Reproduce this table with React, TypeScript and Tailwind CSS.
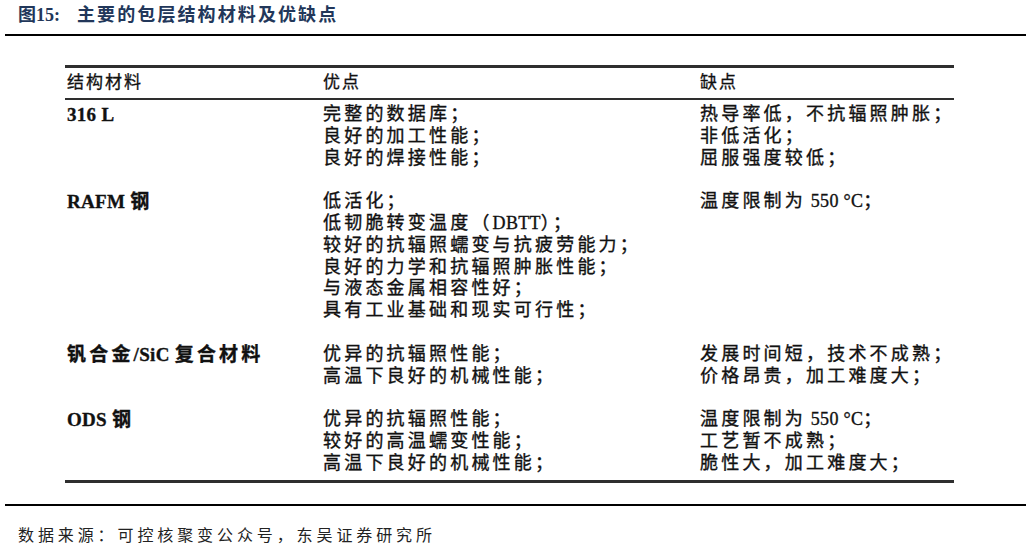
import React from 'react';

const FONT = '"Liberation Serif", "Noto Sans CJK SC", serif';

const ROWS = [
  {
    name: '316 L',
    pros: ['完整的数据库；', '良好的加工性能；', '良好的焊接性能；'],
    cons: ['热导率低，不抗辐照肿胀；', '非低活化；', '屈服强度较低；'],
  },
  {
    name: 'RAFM 钢',
    pros: [
      '低活化；',
      '低韧脆转变温度（DBTT）；',
      '较好的抗辐照蠕变与抗疲劳能力；',
      '良好的力学和抗辐照肿胀性能；',
      '与液态金属相容性好；',
      '具有工业基础和现实可行性；',
    ],
    cons: ['温度限制为 550 °C；'],
  },
  {
    name: '钒合金/SiC 复合材料',
    pros: ['优异的抗辐照性能；', '高温下良好的机械性能；'],
    cons: ['发展时间短，技术不成熟；', '价格昂贵，加工难度大；'],
  },
  {
    name: 'ODS 钢',
    pros: ['优异的抗辐照性能；', '较好的高温蠕变性能；', '高温下良好的机械性能；'],
    cons: ['温度限制为 550 °C；', '工艺暂不成熟；', '脆性大，加工难度大；'],
  },
];

// latin runs keep normal spacing, CJK gets the wide scan-like spacing
function Mixed({ text }: { text: string }) {
  const parts = text.split(/([A-Za-z0-9/°. ]+)/).filter(Boolean);
  return (
    <span className="whitespace-nowrap">
      {parts.map((p, i) =>
        /^[A-Za-z0-9/°. ]+$/.test(p)
          ? <span key={i} className="tracking-[0.3px]">{p}</span>
          : <span key={i} className="tracking-[3.2px]">{p}</span>
      )}
    </span>
  );
}

export default function App() {
  return (
    <div className="w-[1032px] h-[552px] bg-white overflow-hidden" style={{ fontFamily: FONT }}>
      {/* caption */}
      <div className="h-[30px] pl-[18px] flex items-center text-[18px] font-bold text-[#22375a]">
        <span>图15:</span>
        <span className="ml-[17px] tracking-[2.1px]">主要的包层结构材料及优缺点</span>
      </div>
      <div className="mt-[4px] ml-[5px] w-[1021px] h-[2px] bg-black" />

      {/* table */}
      <div className="mt-[29px] ml-[65px] w-[889px] text-[18px] text-[#111]">
        <div className="h-[3px] bg-[#2e2e2e]" />
        <div className="h-[30px] pl-[2px] grid grid-cols-[256px_377px_1fr] items-center tracking-[2px] text-[17px] [-webkit-text-stroke:0.3px_#111]">
          <span>结构材料</span>
          <span>优点</span>
          <span>缺点</span>
        </div>
        <div className="h-[2px] bg-[#2e2e2e]" />
        <div className="pt-[4px] pb-[5px] pl-[2px] flex flex-col gap-[21.8px] leading-[21.8px] [-webkit-text-stroke:0.35px_#111]">
          {ROWS.map(r => (
            <div key={r.name} className="grid grid-cols-[256px_377px_1fr]">
              <div className="font-bold text-[19px] leading-[21.8px]"><Mixed text={r.name} /></div>
              <div className="flex flex-col">
                {r.pros.map(p => <Mixed key={p} text={p} />)}
              </div>
              <div className="flex flex-col">
                {r.cons.map(c => <Mixed key={c} text={c} />)}
              </div>
            </div>
          ))}
        </div>
        <div className="h-[3px] bg-[#2e2e2e]" />
      </div>

      <div className="mt-[21px] ml-[5px] w-[1021px] h-[2px] bg-black" />

      {/* source */}
      <div className="mt-[15px] h-[30px] pl-[18px] leading-[30px] text-[16px] tracking-[3.9px] text-[#222]">
        数据来源：可控核聚变公众号，东吴证券研究所
      </div>
    </div>
  );
}
